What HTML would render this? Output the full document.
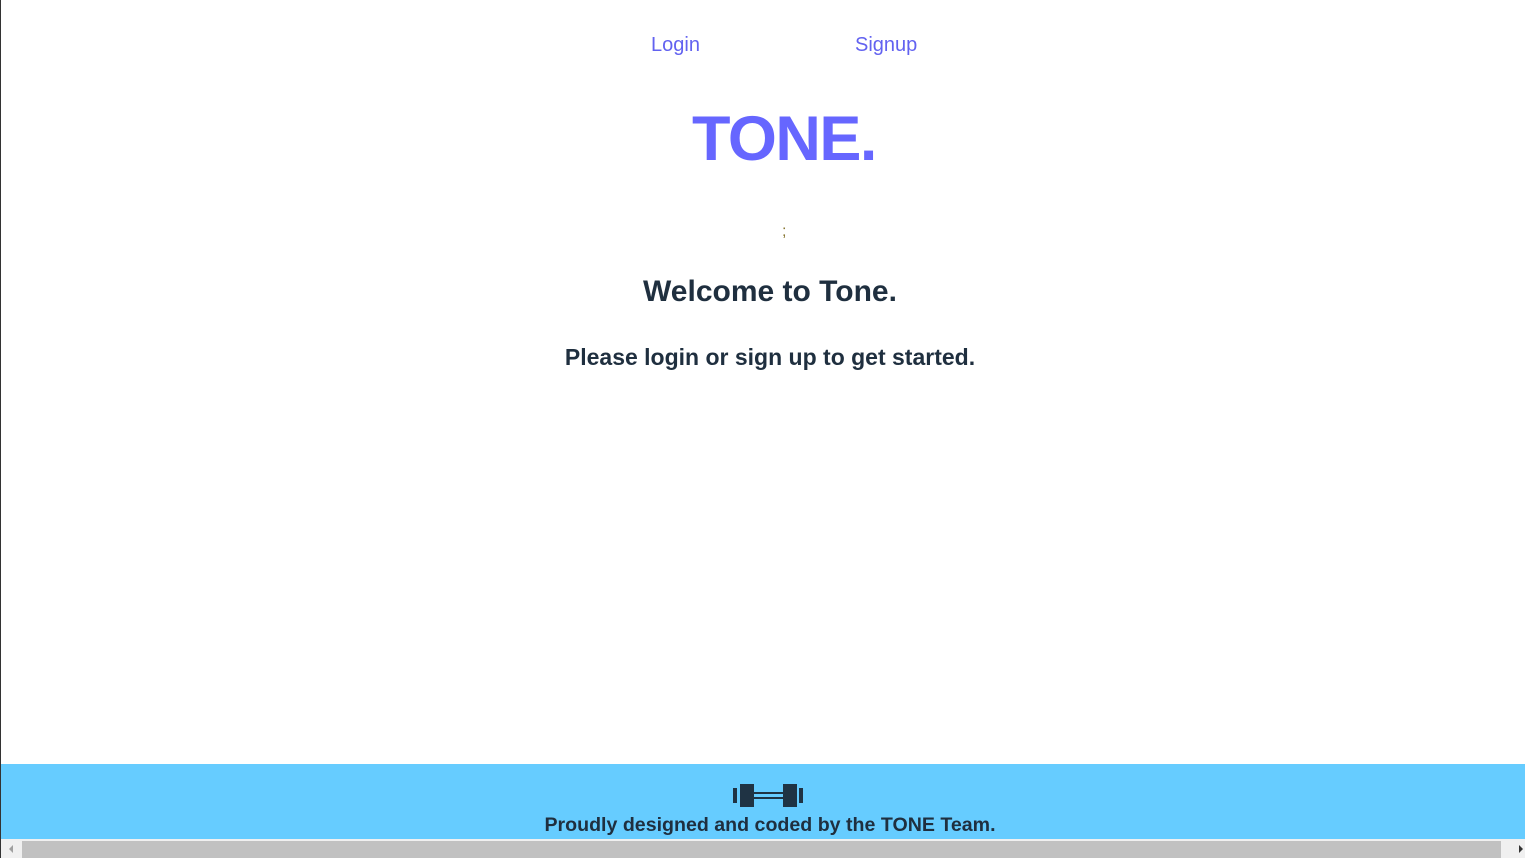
<!DOCTYPE html>
<html><head><style>
body{margin:0;width:1525px;height:858px;overflow:hidden;background:#fff;font-family:"Liberation Sans",sans-serif;position:relative;border-left:1px solid #333;box-sizing:border-box}
.a{position:absolute;white-space:nowrap}
.nav{color:#6262f0;font-size:20px;top:34px}
.t{color:#6666ff;font-weight:bold;font-size:63px;top:103px;left:691px;letter-spacing:-1.5px}
.h{color:#1f2f3f;font-weight:bold;left:0;right:0;text-align:center}
footer{position:absolute;left:0;right:0;top:764px;height:75px;background:#66ccff}
.sb{position:absolute;left:0;right:0;top:839px;height:19px;background:#f0f0f0}
</style></head><body>
<div class="a nav" style="left:650px">Login</div>
<div class="a nav" style="left:854px">Signup</div>
<div class="a t">TONE.</div>
<div class="a" style="left:781px;top:223px;font-size:16px;color:#887733">;</div>
<div class="a h" style="top:275px;font-size:30px;left:14px">Welcome to Tone.</div>
<div class="a h" style="top:344px;font-size:23px;left:14px">Please login or sign up to get started.</div>
<footer>
<svg style="position:absolute;left:731px;top:20px" width="73" height="24" viewBox="0 0 73 24"><g fill="#1f3344">
<rect x="1" y="4" width="4" height="15"/><rect x="8" y="0" width="14" height="23"/>
<rect x="22" y="8" width="29" height="2"/><rect x="22" y="13" width="29" height="2"/>
<rect x="51" y="0" width="14" height="23"/><rect x="67" y="4" width="4" height="15"/></g></svg>
<div class="a h" style="top:50px;font-size:19.6px;left:14px">Proudly designed and coded by the TONE Team.</div>
</footer>
<div class="sb"><div style="position:absolute;left:21px;right:24px;top:2px;bottom:0;background:#c1c1c1"></div>
<div style="position:absolute;left:8px;top:6px;border-right:4px solid #a0a0a0;border-top:4px solid transparent;border-bottom:4px solid transparent"></div>
<div style="position:absolute;right:2px;top:6px;border-left:4px solid #333;border-top:4px solid transparent;border-bottom:4px solid transparent"></div></div>
</body></html>
